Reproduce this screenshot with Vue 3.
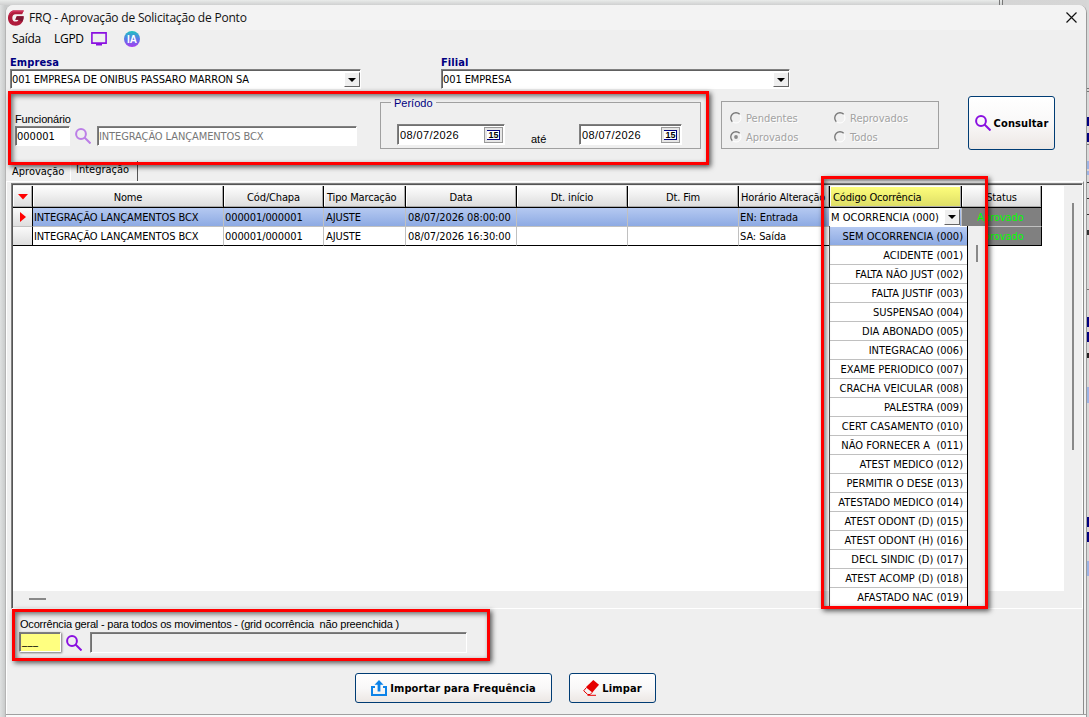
<template>
  <div class="desktop">
    <div class="desktop-split"></div>
    <div class="desktop-edge">
      <i v-for="(m, i) in edgeMarks" :key="i" :style="{ top: m.y + 'px', height: m.h + 'px', background: m.c }"></i>
    </div>

    <div class="window">
      <header class="titlebar">
        <svg class="logo" viewBox="0 0 16 16">
          <path fill="#b01c3c" d="M5 .4h10.800L14.200 4.200H7.400C5.500 4.200 4.300 5.800 4.300 7.900c0 2.100 1.300 3.700 3.200 3.700 1.500 0 2.600-.7 3-1.900H7.300L8.800 6.300h6.800c.3 5.600-2.800 9.500-7.900 9.500C3.200 15.800 0 12.700 0 8.300 0 4.300 2 1.300 5 .4z" />
          <path fill="#7d1733" d="M8.800 6.300h6.800c.1 2.100-.4 3.900-1.400 5.400L10.500 9.700H7.300z" />
          <path fill="#d0305a" d="M5 .4h10.800l-.8 1.800H4.500C3 3 1.600 4.500.8 6 1.300 3.200 2.800 1.200 5 .4z" />
        </svg>
        <span class="title">FRQ - Aprovação de Solicitação de Ponto</span>
        <svg class="close" viewBox="0 0 11 11"><path d="M.5.5l10 10M10.500.5l-10 10" stroke="#111" stroke-width="1.200" /></svg>
      </header>

      <nav class="menu">
        <span class="menu-saida">Saída</span>
        <span class="menu-lgpd">LGPD</span>
        <svg class="monitor" viewBox="0 0 16 14">
          <path fill="none" stroke="#8a10e0" stroke-width="1.600" d="M.9.9h14.200v10.200H.9z" />
          <path fill="#8a10e0" d="M5 11h6v2.600H5z" />
        </svg>
        <span class="ia">IA</span>
      </nav>

      <section class="company">
        <div class="field empresa">
          <label>Empresa</label>
          <div class="combo"><span>001 EMPRESA DE ONIBUS PASSARO MARRON SA</span><b class="arrow"></b></div>
        </div>
        <div class="field filial">
          <label>Filial</label>
          <div class="combo"><span>001 EMPRESA</span><b class="arrow"></b></div>
        </div>
      </section>

      <section class="filters">
        <div class="employee">
          <label>Funcionário</label>
          <div class="employee-row">
            <div class="input code">000001</div>
            <svg class="lens faded" viewBox="0 0 16 16"><circle cx="6" cy="6" r="4.900" /><path d="M9.500 9.500l6 6" /></svg>
            <div class="input name">INTEGRAÇÃO LANÇAMENTOS BCX</div>
          </div>
        </div>

        <fieldset class="period">
          <legend>Período</legend>
          <div class="date"><span>08/07/2026</span><b>15</b></div>
          <em>até</em>
          <div class="date"><span>08/07/2026</span><b>15</b></div>
        </fieldset>

        <div class="status-group">
          <div v-for="s in statuses" :key="s" class="radio">
            <svg viewBox="0 0 12 12">
              <circle cx="6" cy="6" r="5" fill="#f0f0f0" stroke="#fff" />
              <path d="M2.300 9.700A5.200 5.200 0 1 1 9.700 2.300" fill="none" stroke="#777" stroke-width="1.400" />
              <circle v-if="s === 'Aprovados'" cx="6" cy="6" r="1.900" fill="#8a8a8a" />
            </svg>
            <span>{{ s }}</span>
          </div>
        </div>

        <button class="btn consultar">
          <svg class="lens" viewBox="0 0 16 16"><circle cx="6" cy="6" r="4.900" /><path d="M9.500 9.500l6 6" /></svg>
          <span>Consultar</span>
        </button>
      </section>

      <div class="tabs">
        <span class="tab">Aprovação</span>
        <span class="tab active">Integração</span>
      </div>

      <main class="page">
        <div class="grid">
          <div class="grid-body">
            <div class="table">
              <div class="row head">
                <div class="cell mark"><svg viewBox="0 0 10 6"><path d="M0 0h10L5 5.500z" fill="#f00" /></svg></div>
                <div v-for="c in columns" :key="c.label" class="cell" :class="c.key">{{ c.label }}</div>
              </div>
              <div v-for="(r, i) in rows" :key="i" class="row" :class="{ selected: i === 0 }">
                <div class="cell mark"><svg v-if="i === 0" class="pointer" viewBox="0 0 6 10"><path d="M0 0v10l6-5z" fill="#f00" /></svg></div>
                <div v-for="(c, k) in columns" :key="c.key" class="cell" :class="c.key">{{ r[k] }}</div>
              </div>
            </div>
            <div class="vscroll"><i></i></div>
          </div>
          <div class="hscroll"><i></i></div>
        </div>

        <section class="general">
          <label>Ocorrência geral - para todos os movimentos - (grid ocorrência&nbsp; não preenchida )</label>
          <div class="general-row">
            <div class="input yellow">___</div>
            <svg class="lens" viewBox="0 0 16 16"><circle cx="6" cy="6" r="4.900" /><path d="M9.500 9.500l6 6" /></svg>
            <div class="input wide"></div>
          </div>
        </section>

        <footer class="actions">
          <button class="btn importar">
            <svg viewBox="0 0 16 16">
              <path fill="none" stroke="#0d83e8" stroke-width="2" d="M4 7H1v8h14V7h-3" />
              <path fill="#0d83e8" d="M8 0l4.500 4.800H9.400v6.700H6.600V4.800H3.500z" />
            </svg>
            <span>Importar para Frequência</span>
          </button>
          <button class="btn limpar">
            <svg viewBox="0 0 16 16">
              <path fill="#e60000" d="M10.300 0L16 4.800 9.300 12.500 2.800 7.300z" />
              <path fill="none" stroke="#e60000" stroke-width="1" d="M3 8L.7 10.800l4 3.700h2.500l2-2.200M4.500 15.300H13" />
            </svg>
            <span>Limpar</span>
          </button>
        </footer>
        <div class="bottom-line"></div>
      </main>
    </div>

    <div class="dropdown">
      <div class="dropdown-edit"><span>M OCORRENCIA (000)</span><b class="arrow"></b></div>
      <div class="dropdown-list">
        <ul>
          <li v-for="(o, i) in occurrences" :key="o" :class="{ current: i === 0 }">{{ o }}</li>
        </ul>
        <div class="dropdown-scroll"><i></i></div>
      </div>
    </div>

    <div class="highlight hl-filter"></div>
    <div class="highlight hl-occurrence"></div>
    <div class="highlight hl-general"></div>
  </div>
</template>

<script setup>
const statuses = ['Pendentes', 'Reprovados', 'Aprovados', 'Todos']

const columns = [
  { key: 'nome', label: 'Nome' },
  { key: 'chapa', label: 'Cód/Chapa' },
  { key: 'tipo', label: 'Tipo Marcação' },
  { key: 'data', label: 'Data' },
  { key: 'inicio', label: 'Dt. início' },
  { key: 'fim', label: 'Dt. Fim' },
  { key: 'horario', label: 'Horário Alteração' },
  { key: 'codigo', label: 'Código Ocorrência' },
  { key: 'status', label: 'Status' }
]

const rows = [
  ['INTEGRAÇÃO LANÇAMENTOS BCX', '000001/000001', 'AJUSTE', '08/07/2026 08:00:00', '', '', 'EN: Entrada', '', 'Aprovado'],
  ['INTEGRAÇÃO LANÇAMENTOS BCX', '000001/000001', 'AJUSTE', '08/07/2026 16:30:00', '', '', 'SA: Saída', '', 'Aprovado']
]

const occurrences = [
  'SEM OCORRENCIA (000)',
  'ACIDENTE (001)',
  'FALTA NÃO JUST (002)',
  'FALTA JUSTIF (003)',
  'SUSPENSAO (004)',
  'DIA ABONADO (005)',
  'INTEGRACAO (006)',
  'EXAME PERIODICO (007)',
  'CRACHA VEICULAR (008)',
  'PALESTRA (009)',
  'CERT CASAMENTO (010)',
  'NÃO FORNECER A  (011)',
  'ATEST MEDICO (012)',
  'PERMITIR O DESE (013)',
  'ATESTADO MEDICO (014)',
  'ATEST ODONT (D) (015)',
  'ATEST ODONT (H) (016)',
  'DECL SINDIC (D) (017)',
  'ATEST ACOMP (D) (018)',
  'AFASTADO NAC (019)'
]

// slivers of the window behind, visible on the right side
const edgeMarks = [
  { y: 88, h: 1, c: '#777' },
  { y: 91, h: 1, c: '#777' },
  { y: 117, h: 9, c: '#000080' },
  { y: 133, h: 9, c: '#000080' },
  { y: 144, h: 1, c: '#777' },
  { y: 161, h: 8, c: '#9db4e4' },
  { y: 171, h: 4, c: '#9db4e4' },
  { y: 182, h: 1, c: '#333' },
  { y: 198, h: 1, c: '#333' },
  { y: 214, h: 1, c: '#333' },
  { y: 230, h: 5, c: '#333' },
  { y: 289, h: 1, c: '#777' },
  { y: 317, h: 10, c: '#000080' },
  { y: 332, h: 10, c: '#000080' },
  { y: 353, h: 5, c: '#222' },
  { y: 387, h: 16, c: '#9db4e4' },
  { y: 517, h: 10, c: '#000080' },
  { y: 532, h: 10, c: '#000080' },
  { y: 561, h: 15, c: '#9db4e4' }
]
</script>

<style>
body {
  overflow: hidden;
}
</style>

<style scoped>
* {
  box-sizing: border-box;
}

.desktop {
  position: relative;
  width: 1089px;
  height: 717px;
  padding: 5px 0 0 5px;
  overflow: hidden;
  background: linear-gradient(90deg, #dfe1e1 0, #c9cbcb 5px, #d6d6d6 100%);
  font-family: "DejaVu Sans Condensed", "DejaVu Sans", sans-serif;
  font-size: 11px;
  letter-spacing: -0.1px;
  color: #000;
}

.desktop-split {
  position: absolute;
  left: 0;
  top: 0;
  width: 1003px;
  height: 5px;
  background: linear-gradient(#e9ebea, #cfd0d0);
  border-right: 4px double #777;
}

.desktop-edge {
  position: absolute;
  left: 1087px;
  top: 0;
  width: 2px;
  height: 717px;
  background: #d8d8d8;
}

.desktop-edge i {
  position: absolute;
  left: 0;
  width: 2px;
}

/* window */
.window {
  width: 1082px;
  height: 712px;
  border-left: 1px solid #b5b5b5;
  border-right: 1px solid #9a9a9a;
  border-radius: 8px 8px 0 0;
  background: #efefef;
  overflow: hidden;
}

.titlebar {
  display: flex;
  align-items: center;
  height: 25px;
  padding: 0 9px 0 2px;
  background: #f3f3f3;
}

.logo {
  width: 16px;
  height: 16px;
}

.title {
  flex: 1;
  margin-left: 5px;
  font-family: "Open Sans", "Noto Sans", sans-serif;
  font-size: 12px;
  letter-spacing: -0.2px;
  color: #111;
}

.close {
  width: 11px;
  height: 11px;
}

.menu {
  display: flex;
  align-items: center;
  height: 18px;
  padding-left: 6px;
  font-family: "Open Sans", "Noto Sans", sans-serif;
  font-size: 12px;
  letter-spacing: -0.3px;
}

.menu span {
  line-height: 16px;
}

.menu-saida {
  width: 42px;
}

.menu-lgpd {
  width: 37px;
}

.monitor {
  width: 16px;
  height: 14px;
}

.menu .ia {
  width: 16px;
  height: 16px;
  margin-left: 17px;
  border-radius: 50%;
  background: linear-gradient(#1cc3c0, #5a78e8 50%, #a63cf0);
  color: #fff;
  font: bold 10px/17px "Liberation Sans", sans-serif;
  letter-spacing: 0;
  text-align: center;
}

/* company */
.company {
  display: flex;
  gap: 80px;
  height: 41px;
  padding: 7px 0 0 4px;
}

.field label {
  display: block;
  height: 14px;
  font: bold 11px/16px "DejaVu Sans Condensed", sans-serif;
  letter-spacing: 0.1px;
  color: #000080;
}

.empresa {
  width: 351px;
}

.filial {
  width: 349px;
}

.combo {
  display: flex;
  height: 20px;
  border: 1px solid #808080;
  border-right-color: #fff;
  border-bottom-color: #fff;
  box-shadow: inset 1px 1px #606060;
  padding: 2px 0 1px 1px;
  background: #fff;
  line-height: 16px;
}

.combo span {
  flex: 1;
}

.arrow {
  display: flex;
  align-items: center;
  justify-content: center;
  width: 16px;
  background: #efefef;
  border: 1px solid #fff;
  border-right-color: #666;
  border-bottom-color: #666;
}

.arrow::after {
  content: '';
  border: 4px solid transparent;
  border-top-color: #000;
  border-bottom: 0;
}

/* filters */
.filters {
  display: flex;
  height: 72px;
  padding: 7px 0 0 9px;
}

.employee {
  width: 365px;
  padding-top: 16px;
}

.employee label {
  display: block;
  height: 14px;
  font: 11px/14px "Liberation Sans", sans-serif;
  letter-spacing: -0.15px;
}

.employee-row,
.general-row {
  display: flex;
  align-items: center;
}

.input {
  height: 20px;
  border: 1px solid #808080;
  border-right-color: #fff;
  border-bottom-color: #fff;
  box-shadow: inset 1px 1px #707070;
  padding-left: 2px;
  line-height: 19px;
  background: #fff;
}

.code {
  width: 55px;
  padding-left: 1px;
  letter-spacing: 0;
}

.name {
  width: 260px;
  padding-left: 1px;
  color: #777;
}

.lens {
  width: 16px;
  height: 16px;
  fill: none;
  stroke: #8a10e0;
  stroke-width: 2;
}

.employee-row .lens {
  margin: 0 6px 0 5px;
}

.faded {
  opacity: 0.5;
}

.period {
  display: flex;
  align-items: flex-start;
  width: 321px;
  height: 52px;
  margin: 1px 0 0;
  padding: 17px 0 0 16px;
  border: 1px solid #a0a0a0;
  font-family: "Liberation Sans", sans-serif;
  letter-spacing: 0;
}

.period legend {
  height: 10px;
  margin-left: -6px;
  padding: 0 3px;
  line-height: 12px;
  color: #000080;
}

.date {
  display: flex;
  width: 108px;
  height: 21px;
  padding: 2px 1px 1px 2px;
  border: 1px solid #808080;
  border-right-color: #fff;
  border-bottom-color: #fff;
  box-shadow: inset 1px 1px #707070;
  background: #fff;
  line-height: 17px;
  letter-spacing: 0.4px;
}

.date:last-child {
  width: 103px;
}

.date span {
  flex: 1;
}

.date b {
  width: 19px;
  border: 3px solid #e6e6e6;
  outline: 1px solid #999;
  outline-offset: -1px;
  background: #fff;
  box-shadow: inset -1px -1px #000080, inset 0 1px #000080;
  font: bold 9px/11px "Liberation Sans", sans-serif;
  letter-spacing: 0;
  text-align: center;
}

.period em {
  width: 74px;
  padding: 9px 0 0 26px;
  font-style: normal;
}

.status-group {
  display: grid;
  grid-template-columns: 104px 100px;
  grid-template-rows: 18px 19px;
  width: 218px;
  height: 48px;
  margin: 5px 0 0 20px;
  padding: 7px 0 0 8px;
  border: 1px solid #a0a0a0;
  color: #a2a2a2;
  letter-spacing: 0;
  text-shadow: 1px 1px #fff;
}

.radio {
  display: flex;
  align-items: center;
}

.radio svg {
  width: 12px;
  height: 12px;
  margin-right: 4px;
}

.radio span {
  padding-top: 1px;
}

.btn {
  display: flex;
  align-items: center;
  justify-content: center;
  border: 1px solid #003c74;
  border-radius: 3px;
  background: linear-gradient(#fff, #f9f8f8 50%, #ece7e4);
  padding: 0;
  color: #000;
  font: bold 11px "DejaVu Sans Condensed", sans-serif;
  letter-spacing: 0.12px;
}

.btn svg {
  width: 16px;
  height: 16px;
  margin-right: 3px;
}

.consultar {
  width: 87px;
  height: 54px;
  margin: 0 0 0 29px;
}

/* tabs */
.tabs {
  display: flex;
  align-items: flex-end;
  height: 20px;
  padding-left: 2px;
  letter-spacing: 0;
}

.tab {
  width: 62px;
  height: 18px;
  padding-left: 4px;
  line-height: 18px;
}

.tab.active {
  width: 68px;
  height: 20px;
  padding-left: 5px;
  line-height: 18px;
  border-right: 1px solid #555;
  border-left: 1px solid #fff;
}

/* tab page */
.page {
  height: 536px;
  margin-right: 2px;
  border: 1px solid #fff;
  border-right-color: #8c8c8c;
  border-bottom: 0;
}

.grid {
  width: 1072px;
  height: 426px;
  margin: 1px 0 0 4px;
  border: 1px solid #808080;
  border-right-color: #fff;
  border-bottom-color: #fff;
  box-shadow: inset 1px 1px #555;
  padding: 2px 0 0 1px;
}

.grid-body {
  display: flex;
  height: 405px;
  background: #fff;
}

.table {
  flex: 1;
}

.row {
  display: flex;
  height: 19px;
  line-height: 20px;
}

.cell {
  padding-left: 1px;
  border-right: 1px solid #c0c0c0;
  border-bottom: 1px solid #c0c0c0;
  white-space: nowrap;
  overflow: hidden;
}

.row:last-child .cell {
  border-bottom-color: #000;
}

.mark {
  display: flex;
  align-items: center;
  justify-content: center;
  width: 20px;
  background: linear-gradient(#fafafa, #dedede);
  border-right-color: #000;
}

.mark svg {
  width: 10px;
  height: 6px;
}

.mark .pointer {
  width: 6px;
  height: 10px;
}

.nome { width: 191px; }
.chapa { width: 100px; }
.tipo { width: 82px; padding-left: 2px; }
.data { width: 111px; padding-left: 2px; }
.inicio { width: 111px; }
.fim { width: 111px; }
.horario { width: 91px; }
.codigo { width: 132px; }
.status { width: 80px; }

.row.head {
  height: 22px;
  line-height: 23px;
  letter-spacing: -0.15px;
  text-align: center;
}

.head .cell {
  padding-left: 0;
  border-right-color: #000;
  border-bottom-color: #000;
  background: linear-gradient(#fefefe, #dcdcdc);
  box-shadow: inset -1px -1px #aaa, inset 1px 1px #fff;
}

.head .tipo {
  text-align: left;
  padding-left: 3px;
}

.head .horario {
  text-align: left;
  padding-left: 2px;
}

.head .codigo {
  text-align: left;
  padding-left: 3px;
  background: linear-gradient(#ffff7c, #dddd66);
}

.selected .cell:not(.mark) {
  background: linear-gradient(#b5c9f1, #8daae3);
}

.row:not(.head) .status,
.row.selected .status {
  padding: 0 2px 0 0;
  background: #808080;
  color: #0f0;
  text-align: center;
  border-right-color: #000;
}

.vscroll {
  width: 18px;
  padding: 17px 0 0 8px;
  background: #efefef;
}

.vscroll i {
  display: block;
  width: 2px;
  height: 247px;
  background: #888;
}

.hscroll {
  height: 17px;
  padding: 7px 0 0 16px;
}

.hscroll i {
  display: block;
  width: 17px;
  height: 2px;
  background: #888;
}

/* general occurrence */
.general {
  height: 64px;
  padding: 8px 0 0 12px;
}

.general label {
  display: block;
  height: 14px;
  padding-left: 1px;
  font: 11px/15px "Liberation Sans", sans-serif;
  letter-spacing: -0.2px;
}

.yellow {
  width: 42px;
  background: #ffff80;
  box-shadow: inset 1px 1px #777, 1px 1px 2px #777;
  letter-spacing: 0.5px;
  line-height: 16px;
}

.general-row .lens {
  margin: 1px 8px 0 5px;
}

.wide {
  width: 377px;
  height: 21px;
  margin-top: 1px;
  background: #efefef;
}

.actions {
  display: flex;
  gap: 17px;
  padding-left: 348px;
}

.actions .btn {
  height: 30px;
}

.importar {
  width: 197px;
}

.limpar {
  width: 87px;
}

.bottom-line {
  height: 4px;
  margin: 11px -3px 0 -1px;
  border-top: 1px solid #a0a0a0;
  background: #fafafa;
}

/* open dropdown over the grid */
.dropdown {
  position: absolute;
  left: 829px;
  top: 208px;
  width: 157px;
  letter-spacing: 0;
}

.dropdown-edit {
  display: flex;
  width: 131px;
  height: 18px;
  padding: 1px 0 1px 2px;
  background: #fff;
  line-height: 17px;
}

.dropdown-edit span {
  flex: 1;
  white-space: nowrap;
}

.dropdown-list {
  display: flex;
  height: 381px;
  overflow: hidden;
  background: #efefef;
}

.dropdown ul {
  width: 139px;
  margin: 0;
  padding: 1px 0 0;
  border-left: 1px solid #555;
  border-right: 1px solid #000;
  list-style: none;
  background: #fff;
}

.dropdown li {
  height: 19px;
  padding-right: 4px;
  border-bottom: 1px solid #c0c0c0;
  line-height: 20px;
  text-align: right;
  white-space: pre;
}

.dropdown li.current {
  background: linear-gradient(#b5c9f1, #8daae3);
}

.dropdown-scroll {
  padding: 19px 0 0 8px;
}

.dropdown-scroll i {
  display: block;
  width: 2px;
  height: 17px;
  background: #888;
}

/* red annotations */
.highlight {
  position: absolute;
  border: 3px solid #f00;
  box-shadow: 2px 2px 5px rgba(0, 0, 0, 0.65), inset 2px 2px 5px rgba(0, 0, 0, 0.55);
}

.hl-filter {
  left: 8px;
  top: 91px;
  width: 701px;
  height: 74px;
}

.hl-occurrence {
  left: 821px;
  top: 176px;
  width: 167px;
  height: 433px;
}

.hl-general {
  left: 12px;
  top: 609px;
  width: 478px;
  height: 52px;
}
</style>
